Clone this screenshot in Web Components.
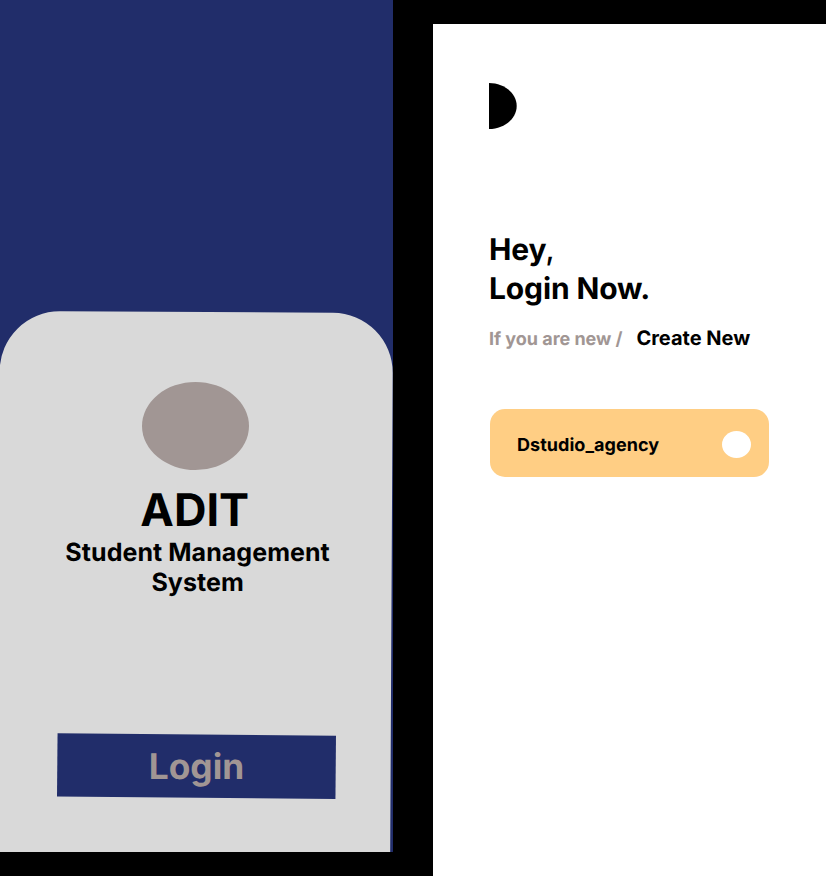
<!DOCTYPE html>
<html lang="en">
<head>
<meta charset="utf-8">
<title>ADIT Student Management System</title>
<style>
html, body { margin: 0; height: 100%; background: #000; }
body { font-family: Inter, "Liberation Sans", sans-serif; font-weight: 700; color: #000; overflow: hidden;
  text-rendering: geometricPrecision;
  --navy: #212d6a; --panel: #d9d9d9; --mauve: #a19694; --peach: #ffce84; }
</style>
</head>
<body>
<app-board>
  <welcome-screen>
    <span slot="name">ADIT</span>
    <span slot="tagline">Student Management<br>System</span>
    <tilt-button slot="action">Login</tilt-button>
  </welcome-screen>
  <login-screen>
    <half-logo slot="logo"></half-logo>
    <account-card slot="account">Dstudio_agency</account-card>
  </login-screen>
</app-board>
<script>
const define = (name, html) => {
  const template = document.createElement('template');
  template.innerHTML = html;
  customElements.define(name, class extends HTMLElement {
    constructor() {
      super();
      this.attachShadow({ mode: 'open' }).append(template.content.cloneNode(true));
    }
  });
};

define('app-board', `
<style>
:host { display: grid; grid-template-columns: 393px 393px; column-gap: 40px; width: 826px; height: 876px; align-items: start; background: #000; }
::slotted(login-screen) { margin-top: 24px; }
</style><slot></slot>`);

define('welcome-screen', `
<style>
:host { display: grid; grid-template-rows: 311px 541px; height: 852px; overflow: hidden; background: var(--navy); }
.sheet, .content { grid-row: 2; grid-column: 1; }
.sheet { height: 600px; width: 392.7px; background: var(--panel); border-radius: 60px 60px 0 0; transform: rotate(.3deg); transform-origin: 0 0; }
.content { z-index: 1; display: flex; flex-direction: column; align-items: center; padding-top: 71px; box-sizing: border-box; width: 393px; }
.avatar { width: 107px; height: 88px; border-radius: 50%; background: var(--mauve); margin-right: 2px; }
.name { font-size: 45px; line-height: 54px; margin: 13px 3.5px 0 0; }
.tagline { font-size: 25px; line-height: 30px; letter-spacing: .06px; text-align: center; margin: 1px 0 0 2.2px; }
.action { margin-top: 136px; }
</style>
<div class="sheet"></div>
<div class="content">
  <div class="avatar"></div>
  <div class="name"><slot name="name"></slot></div>
  <div class="tagline"><slot name="tagline"></slot></div>
  <div class="action"><slot name="action"></slot></div>
</div>`);

define('tilt-button', `
<style>
:host { display: grid; width: 279px; height: 65px; font-size: 35.3px; line-height: 44px; color: var(--mauve); }
.plate, .label { grid-area: 1 / 1; }
.plate { height: 64px; background: var(--navy); transform: translateY(.1px) rotate(.5deg) scale(.998, .99); }
.label { z-index: 1; text-align: center; padding-top: 11px; }
</style>
<div class="plate"></div><div class="label"><slot></slot></div>`);

define('login-screen', `
<style>
:host { display: block; height: 852px; padding: 59px 56px 0; box-sizing: border-box; background: #fff; }
h1 { margin: 102px 0 0; font-size: 30px; line-height: 39px; font-weight: 700; letter-spacing: -.12px; }
.comma { font-weight: 500; margin-left: -1px; }
.hint { display: flex; align-items: baseline; height: 24px; margin-top: 17px; font-size: 18px; line-height: 22px; color: var(--mauve); white-space: nowrap; }
.hint > :first-child { letter-spacing: -.04px; }
.link { margin-left: 14px; font-size: 20px; line-height: 24px; color: #000; }
.account { margin: 59px 0 0 1px; width: 279px; }
</style>
<slot name="logo"></slot>
<h1>Hey<span class="comma">,</span><br>Login Now.</h1>
<div class="hint"><span>If you are new /</span><span class="link">Create New</span></div>
<div class="account"><slot name="account"></slot></div>`);

define('half-logo', `
<style>
:host { display: block; height: 46px; }
svg { display: block; }
</style>
<svg width="28" height="46" viewBox="0 0 28 46"><path d="M0 0C15.2 0 27.7 10.3 27.7 23S15.2 46 0 46Z"/></svg>`);

define('account-card', `
<style>
:host { display: flex; align-items: center; justify-content: space-between; height: 68px; padding: 3px 18px 0 27px; box-sizing: border-box; border-radius: 15px; background: var(--peach); font-size: 18px; line-height: 22px; letter-spacing: .04px; }
.label { padding-top: 2px; }
.dot { width: 29px; height: 27px; border-radius: 50%; background: #fff; }
</style>
<span class="label"><slot></slot></span><span class="dot"></span>`);
</script>
</body>
</html>
